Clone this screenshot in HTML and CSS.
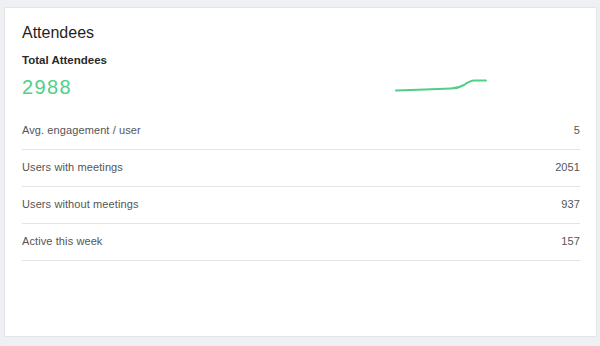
FILE: index.html
```html
<!DOCTYPE html>
<html lang="en">
<head>
  <meta charset="UTF-8">
  <meta name="viewport" content="width=device-width, initial-scale=1.0">
  <title>Attendees</title>
  <link rel="stylesheet" href="styles.css">
</head>
<body>
  <div class="card">
    <h2 class="card-title">Attendees</h2>

    <div class="summary">
      <div class="summary-label">Total Attendees</div>
      <div class="summary-value">2988</div>
      <div class="summary-spark">
        <!-- attendee trend -->
        <svg width="94" height="24" viewBox="0 0 94 24">
          <path d="M2 15.6 C20 15 40 14.2 57 13.6 C62 13.4 66 12.2 70 10 C74 7 76 5.4 80 5.4 L92 5.4" fill="none" stroke="#4fcf8a" stroke-width="2" stroke-linecap="round"/>
        </svg>
      </div>
    </div>

    <ul class="stats">
      <li class="stat-row"><span>Avg. engagement / user</span><span>5</span></li>
      <li class="stat-row"><span>Users with meetings</span><span>2051</span></li>
      <li class="stat-row"><span>Users without meetings</span><span>937</span></li>
      <li class="stat-row"><span>Active this week</span><span>157</span></li>
    </ul>
  </div>
</body>
</html>
```

FILE: styles.css
```css
body {
  margin: 0;
  padding: 7px 3px 9px 4px;
  background-color: #eef0f3;
  font-family: "Liberation Sans", Arial, sans-serif;
}

.card {
  height: 330px;
  box-sizing: border-box;
  background-color: #fff;
  border: 1px solid #e3e5e9;
  padding: 15px 16px 0 17px;
}

.card-title {
  margin: 0;
  font-size: 16px;
  line-height: 20px;
  font-weight: normal;
  color: #1f1f1f;
}

.summary {
  display: grid;
  grid-template-columns: 1fr 1fr;
  margin-top: 9px;
}

.summary-label {
  grid-column: 1;
  grid-row: 1;
  font-size: 11.5px;
  line-height: 16px;
  font-weight: bold;
  color: #2a2a2a;
}

.summary-value {
  grid-column: 1;
  grid-row: 2;
  margin-top: 7px;
  font-size: 20px;
  line-height: 24px;
  color: #4fcf8a;
  letter-spacing: 1.4px;
}

.summary-spark {
  grid-column: 2;
  grid-row: 2;
  margin-top: 7px;
  display: flex;
  justify-content: center;
}

.summary-spark svg {
  display: block;
}

.stats {
  list-style: none;
  margin: 14px 0 0;
  padding: 0;
}

.stat-row {
  display: flex;
  justify-content: space-between;
  padding: 10px 0 12px;
  font-size: 11px;
  line-height: 14px;
  color: #555;
  letter-spacing: 0.1px;
  border-bottom: 1px solid #e4e4e4;
}
```
